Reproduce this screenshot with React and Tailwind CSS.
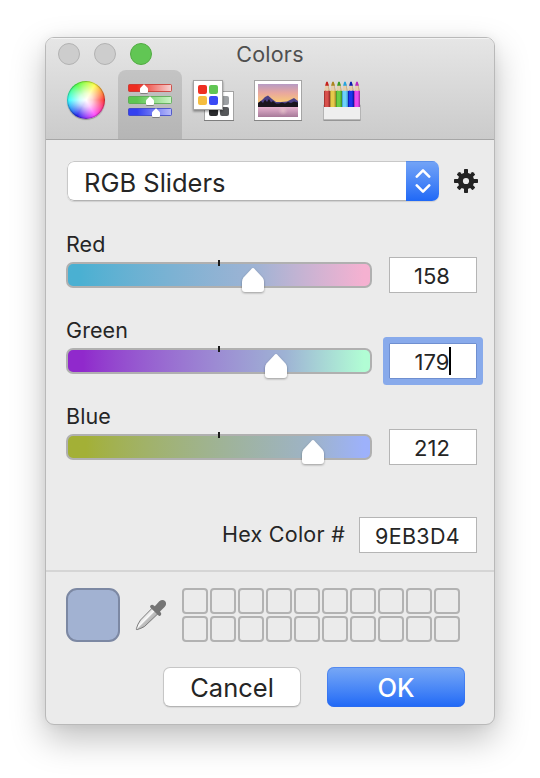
import React from "react";

const channels = [
  { name: "Red", value: "158", track: "bg-linear-to-r from-[#4ab0d2] from-4% via-[#9eb3d4] via-[62%] to-[#f5b1d1] to-98%", thumb: "left-[175px]" },
  { name: "Green", value: "179", track: "bg-linear-to-r from-[#9029cc] from-5% via-[#9eb3d4] via-[72%] to-[#b1fdd4] to-98%", thumb: "left-[198px]", focused: true },
  { name: "Blue", value: "212", track: "bg-linear-to-r from-[#a3b036] from-6% via-[#9eb3c4] via-[79%] to-[#9db1fb] to-98%", thumb: "left-[235px]" },
];

function WheelIcon() {
  return (
    <div className="size-[38px] rounded-full bg-[conic-gradient(from_90deg,#f33,#f4f,#22e,#3ff,#5f4,#ff4,#f33)] shadow-[0_1px_1px_rgba(0,0,0,0.3)] overflow-hidden">
      <div className="size-full rounded-full bg-[radial-gradient(circle,#fff_0%,rgba(255,255,255,0.75)_25%,rgba(255,255,255,0)_68%)] shadow-[inset_0_0_1px_1px_rgba(0,0,0,0.28)]" />
    </div>
  );
}

function SlidersIcon() {
  const bars = [
    { y: 0, x: 16, id: "r", from: "#ee2c20", to: "#f6d4d4", stroke: "#c92a22" },
    { y: 12, x: 22, id: "g", from: "#5dc552", to: "#cdf5c8", stroke: "#4da545" },
    { y: 24, x: 28, id: "b", from: "#3340f0", to: "#b9bcf8", stroke: "#303bc6" },
  ];
  return (
    <svg width="44" height="36" viewBox="0 0 44 36" className="overflow-visible">
      <defs>
        {bars.map((b) => (
          <linearGradient id={b.id} key={b.id}>
            <stop offset="0.2" stopColor={b.from} />
            <stop offset="1" stopColor={b.to} />
          </linearGradient>
        ))}
        <filter id="drop" x="-30%" y="-30%" width="160%" height="180%">
          <feDropShadow dx="0" dy="0.8" stdDeviation="0.6" floodOpacity="0.4" />
        </filter>
      </defs>
      {bars.map((b) => (
        <g key={b.id} transform={`translate(0 ${b.y})`}>
          <rect x="0.5" y="0.5" width="43" height="7" rx="1" fill={`url(#${b.id})`} stroke={b.stroke} strokeOpacity="0.75" />
          <path filter="url(#drop)" transform={`translate(${b.x} 0)`} d="M0 0.2 L4 4.3 V7.8 Q4 9 2.8 9 H-2.8 Q-4 9 -4 7.8 V4.3 Z" fill="#fff" />
        </g>
      ))}
    </svg>
  );
}

function PalettesIcon() {
  return (
    <svg width="42" height="42" viewBox="0 0 42 42" className="overflow-visible">
      <defs>
        <filter id="card" x="-20%" y="-20%" width="140%" height="150%">
          <feDropShadow dx="0" dy="1.5" stdDeviation="1" floodOpacity="0.4" />
        </filter>
      </defs>
      <rect x="11.5" y="11.5" width="29" height="29" fill="#fff" stroke="#a3a3a3" />
      <path d="M11 40.5H41" stroke="#7d7d7d" />
      <rect x="16" y="16" width="9" height="9" rx="2" fill="#ccc" />
      <rect x="27" y="16" width="9" height="9" rx="2" fill="#9da0a3" />
      <rect x="16" y="27" width="9" height="9" rx="2" fill="#2c2d2f" />
      <rect x="27" y="27" width="9" height="9" rx="2" fill="#56585b" />
      <rect x="0.5" y="0.5" width="29" height="29" fill="#fff" stroke="#a3a3a3" filter="url(#card)" />
      <rect x="5" y="5" width="9" height="9" rx="2" fill="#ee2f22" />
      <rect x="16" y="5" width="9" height="9" rx="2" fill="#61c654" />
      <rect x="5" y="16" width="9" height="9" rx="2" fill="#f5bd40" />
      <rect x="16" y="16" width="9" height="9" rx="2" fill="#3a4af5" />
    </svg>
  );
}

function PhotoIcon() {
  return (
    <svg width="48" height="41" viewBox="0 0 48 41">
      <defs>
        <linearGradient id="sky" x2="0" y2="1">
          <stop offset="0" stopColor="#b79bc4" />
          <stop offset="0.45" stopColor="#e9a79e" />
          <stop offset="1" stopColor="#fbd070" />
        </linearGradient>
        <linearGradient id="lake" x2="0" y2="1">
          <stop offset="0" stopColor="#e6b3cf" />
          <stop offset="1" stopColor="#a77a99" />
        </linearGradient>
        <radialGradient id="glow">
          <stop offset="0" stopColor="#ffe9d8" stopOpacity="0.4" />
          <stop offset="1" stopColor="#ffe9d8" stopOpacity="0" />
        </radialGradient>
      </defs>
      <rect x="0.5" y="0.5" width="47" height="40" fill="#fff" stroke="#a5a5a5" />
      <path d="M0 40.5H48" stroke="#858585" />
      <rect x="4" y="4" width="40" height="20" fill="url(#sky)" />
      <path d="M4 23 L8 20 L11 17 L14 15.5 L18 19 L22 22 L27 22 L33 21.5 L37 19.5 L40 18 L44 21 V26 H4Z" fill="#4b4085" />
      <path d="M4 23 L7 21 L9 23 L11 19.5 L13 22 L15 19 L17 22.5 L19 21 L22 23.5 L25 23.5 L28 22.5 L31 23.5 L34 22 L37 23 L40 21.5 L44 22.5 V27 H4Z" fill="#19151d" />
      <rect x="4" y="27" width="40" height="10" fill="url(#lake)" />
      <ellipse cx="29" cy="31" rx="5" ry="4.5" fill="url(#glow)" />
    </svg>
  );
}

function PencilsIcon() {
  const pencils = [
    ["#d8504c", "#8d2826", "#c4201e"],
    ["#e6ca4a", "#98802a", "#a98520"],
    ["#6bcf46", "#3a8a26", "#389c24"],
    ["#6cd2fa", "#3a8fc4", "#24a4e0"],
    ["#1a36ee", "#0a1498", "#0c1cb0"],
    ["#e84af0", "#96269e", "#b828c2"],
  ];
  return (
    <svg width="38" height="41" viewBox="0 0 38 41">
      <path d="M0.5 25H37.5V40H0.5Z" fill="#efefef" stroke="#b4b4b4" />
      <path d="M0.5 40.2H37.5" stroke="#838383" />
      {pencils.map(([body, dark, tip], i) => (
        <g key={body} transform={`translate(${1 + i * 6} 0)`}>
          <path d="M1.7 3 H4.3 L5.9 11.5 H0.1 Z" fill="#e6cfac" />
          <path d="M4.3 4 L5.9 11.5 H4.8 L3.8 4Z" fill="#b5935f" fillOpacity="0.6" />
          <path d="M2.2 2 Q3 1 3.8 2 L4.9 5.8 H1.1Z" fill={tip} />
          <path d="M0 11 Q1.5 10.2 3 11 Q4.5 10.2 6 11 V27 H0Z" fill={body} />
          <path d="M0 11H0.8V27H0Z M5.1 11H6V27H5.1Z" fill={dark} fillOpacity="0.8" />
          <path d="M4 11H5.1V27H4Z" fill={dark} fillOpacity="0.3" />
        </g>
      ))}
    </svg>
  );
}

function GearIcon() {
  return (
    <svg width="24" height="24" viewBox="-12 -12 24 24">
      <g fill="#232323">
        {[0, 45, 90, 135].map((a) => (
          <rect key={a} x="-2" y={a % 90 ? -11.2 : -12} width="4" height={a % 90 ? 22.4 : 24} rx="0.7" transform={`rotate(${a})`} />
        ))}
        <circle r="8.2" />
      </g>
      <circle r="3.1" fill="#ebebeb" />
    </svg>
  );
}

function DropperIcon() {
  return (
    <svg width="32" height="32" viewBox="0 0 32 32">
      <defs>
        <linearGradient id="glass" x1="0.3" y1="0.3" x2="0.7" y2="0.7">
          <stop offset="0" stopColor="#cfcfcf" />
          <stop offset="0.45" stopColor="#fafafa" />
          <stop offset="0.55" stopColor="#c2c2c2" />
          <stop offset="1" stopColor="#aaa" />
        </linearGradient>
      </defs>
      <path d="M17.5 8.8 L23.2 14.5 L9.5 27.5 Q6 29.5 2.2 30.6 Q1 30.9 1.4 29.6 Q2.6 25 5.5 21 Z" fill="url(#glass)" stroke="#707070" strokeWidth="0.9" />
      <path d="M15.3 6.7 Q17 5 18.8 6.5 L19.8 7.2 L24.3 2.3 Q27.5 -0.3 30 2 Q32.3 4.6 29.8 7.8 L25 12.4 L25.7 13.5 Q27 15.2 25.2 16.8 Q24.3 17.4 23.2 16.2 L15.8 9 Q14.7 7.8 15.3 6.7Z" fill="#757575" />
    </svg>
  );
}

function Thumb({ className }) {
  return (
    <svg
      width="24"
      height="26"
      viewBox="-12 0 24 26"
      className={`absolute top-[5px] overflow-visible drop-shadow-[0_1px_1px_rgba(0,0,0,0.35)] ${className}`}
    >
      <path d="M-0.9 1.3 Q0 0.5 0.9 1.3 L9.5 10.5 Q11 12.3 11 14.5 V22 Q11 25 8 25 H-8 Q-11 25 -11 22 V14.5 Q-11 12.3 -9.5 10.5Z" fill="#fff" />
    </svg>
  );
}

function Channel({ name, value, track, thumb, focused }) {
  return (
    <div>
      <div className="h-[26px] text-[21.5px] leading-[26px] tracking-[0.1px]">{name}</div>
      <div className="flex h-9 items-start justify-between">
        <div className="relative mt-[5px] h-[26px] w-[306px] rounded-[7px] bg-[#b0b0b0] p-[2px]">
          <div className={`h-full rounded-[5px] ${track}`} />
          <div className="absolute -top-[2px] left-[152px] h-[6px] w-[2px] bg-[#1c1c1c]" />
          <Thumb className={thumb} />
        </div>
        <div
          className={`flex h-9 w-[88px] items-center justify-center border bg-white pr-[2px] text-[22px] leading-9 ${
            focused ? "border-[#6f8fd0] shadow-[0_0_0_6px_#88aaeb] rounded-[1px]" : "border-[#b5b5b5]"
          }`}
        >
          <span className="relative pt-[2px]">
            {value}
            {focused && <span className="absolute -right-[2px] top-[5px] h-7 w-[2px] bg-black" />}
          </span>
        </div>
      </div>
    </div>
  );
}

const tabs = [WheelIcon, SlidersIcon, PalettesIcon, PhotoIcon, PencilsIcon];

export default function App() {
  return (
    <div className="h-[778px] w-[540px] overflow-hidden bg-white pl-[45px] pt-[37px] font-['Inter',sans-serif] text-[#252525]">
      <div className="flex h-[688px] w-[450px] flex-col overflow-hidden rounded-[9px] border border-[#b9b9b9] bg-[#ebebeb] shadow-[0_14px_34px_rgba(0,0,0,0.25),0_0_12px_rgba(0,0,0,0.05)]">
        <header className="h-[102px] border-b border-[#a6a6a6] bg-linear-to-b from-[#e6e6e6] to-[#cbcbcb] shadow-[inset_0_1px_0_#f3f3f3]">
          <div className="grid h-8 grid-cols-[1fr_auto_1fr] items-center">
            <div className="flex gap-[14px] pl-3">
              <span className="size-[22px] rounded-full border border-[#b2b2b2] bg-[#cdcdcd]" />
              <span className="size-[22px] rounded-full border border-[#b2b2b2] bg-[#cdcdcd]" />
              <span className="size-[22px] rounded-full border border-[#52ab43] bg-[#61c654]" />
            </div>
            <h1 className="text-[21.5px] leading-8 tracking-[0.25px] text-[#4f4f4f]">Colors</h1>
          </div>
          <nav className="flex h-[69px] pl-2">
            {tabs.map((Icon, i) => (
              <button key={i} className={`flex h-[69px] w-16 justify-center rounded-t-lg ${i === 1 ? "bg-linear-to-b from-[#c4c4c4] to-[#b5b5b5] pt-[14px]" : i === 0 ? "pt-[11px]" : "pt-[10px]"} items-start`}>
                <Icon />
              </button>
            ))}
          </nav>
        </header>

        <main className="pl-5 pr-[17px] pt-[21px]">
          <div className="-mr-1 flex items-center pl-px">
            <div className="flex h-10 w-[372px] shrink-0 overflow-hidden rounded-[7px] bg-white shadow-[0_1px_1px_rgba(0,0,0,0.12)]">
              <span className="flex-1 rounded-l-[7px] border border-r-0 border-[#c8c8c8] border-b-[#b2b2b2] pl-[16px] text-[25.5px] leading-[41px]">RGB Sliders</span>
              <span className="flex w-[33px] items-center justify-center bg-linear-to-b from-[#74a4f6] to-[#1f68f6] shadow-[inset_0_1px_0_#5b8fe8]">
                <svg width="16" height="26" viewBox="0 0 16 26" fill="none" stroke="#fff" strokeWidth="2.6" strokeLinecap="round" strokeLinejoin="round">
                  <path d="M1.8 8.6 L8 2.4 L14.2 8.6 M1.8 17.4 L8 23.6 L14.2 17.4" />
                </svg>
              </span>
            </div>
            <div className="ml-[15px] shrink-0"><GearIcon /></div>
          </div>

          <section className="flex flex-col gap-6 pt-[30px]">
            {channels.map((c) => <Channel key={c.name} {...c} />)}
          </section>

          <div className="mt-[52px] flex justify-end gap-[14px] text-[21.5px]">
            <label className="leading-[35px] tracking-[0.25px]">Hex Color #</label>
            <div className="flex h-9 w-[118px] items-center justify-center border border-[#b5b5b5] bg-white pt-[2px] pr-px tracking-[0.3px]">9EB3D4</div>
          </div>
        </main>

        <div className="mt-[17px] h-[2px] bg-[#d5d5d5]" />

        <footer className="pl-5 pt-4">
          <div className="flex">
            <div className="size-[54px] rounded-[11px] border-2 border-[#7c88a3] bg-[#a2b2d2]" />
            <div className="ml-[15px] mt-[11px]"><DropperIcon /></div>
            <div className="ml-[15px] grid grid-cols-10 gap-[2px]">
              {Array.from({ length: 20 }, (_, i) => (
                <span key={i} className="size-[26px] rounded-[4px] border-2 border-[#b2b2b2]" />
              ))}
            </div>
          </div>
          <div className="flex gap-[26px] pl-[97px] pt-[25px] text-[25.5px]">
            <button className="h-10 w-[138px] rounded-[7px] border border-[#c6c6c6] border-b-[#b4b4b4] bg-white leading-10 shadow-[0_1px_1px_rgba(0,0,0,0.08)]">Cancel</button>
            <button className="h-10 w-[138px] rounded-[7px] bg-linear-to-b from-[#78a8f5] to-[#1f68f6] pt-px font-medium leading-10 text-white shadow-[inset_0_0_0_1px_rgba(50,110,235,0.5)]">OK</button>
          </div>
        </footer>
      </div>
    </div>
  );
}
